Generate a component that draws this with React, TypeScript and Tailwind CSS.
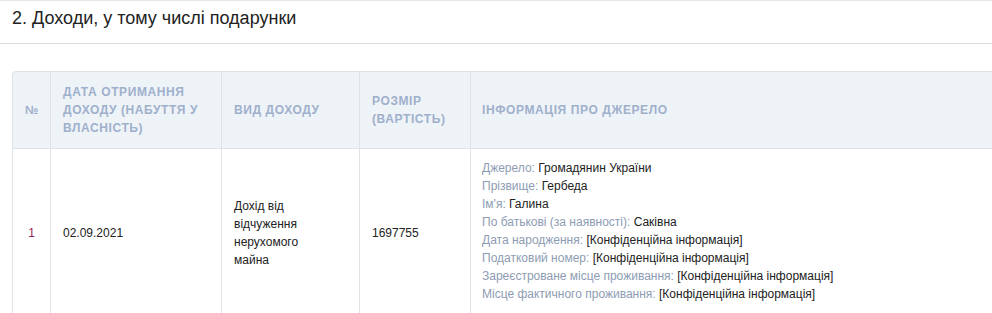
import React from 'react';

const sourceInfo: [string, string][] = [
  ['Джерело', 'Громадянин України'],
  ['Прізвище', 'Гербеда'],
  ["Ім'я", 'Галина'],
  ['По батькові (за наявності)', 'Саківна'],
  ['Дата народження', '[Конфіденційна інформація]'],
  ['Податковий номер', '[Конфіденційна інформація]'],
  ['Зареєстроване місце проживання', '[Конфіденційна інформація]'],
  ['Місце фактичного проживання', '[Конфіденційна інформація]'],
];

const th = 'border border-[#dfe3e8] px-3 py-[11px] text-left align-middle font-bold uppercase tracking-[0.05em] text-[#9fb0cc] text-[12px] leading-[18px]';
const td = 'border border-[#dfe3e8] px-3 align-middle text-[12px] leading-[18px]';

const App: React.FC = () => {
  return (
    <div className="w-[992px] h-[313px] overflow-hidden bg-white font-['Liberation_Sans',Arial,sans-serif] border-t border-[#e6e6e6]">
      <div className="border-b border-[#dddddd] px-3 pt-[6px] pb-[14px]">
        <h2 className="text-[18px] leading-[22px] text-[#222]">2. Доходи, у тому числі подарунки</h2>
      </div>

      <div className="pl-3 pt-[27px]">
        <table className="w-[1100px] table-fixed border-separate border-spacing-0 rounded-tl-[4px]">
          <colgroup>
            <col className="w-[39px]" />
            <col className="w-[171px]" />
            <col className="w-[138px]" />
            <col className="w-[111px]" />
            <col />
          </colgroup>
          <thead>
            <tr className="bg-[#eef3f8]">
              <th className={`${th} text-center px-0 rounded-tl-[4px]`}>№</th>
              <th className={`${th} border-l-0`}>Дата отримання доходу (набуття у власність)</th>
              <th className={`${th} border-l-0`}>Вид доходу</th>
              <th className={`${th} border-l-0`}>Розмір (вартість)</th>
              <th className={`${th} border-l-0 pl-[11px]`}>Інформація про джерело</th>
            </tr>
          </thead>
          <tbody>
            <tr>
              <td className={`${td} border-t-0 text-center px-0 text-[#9a1f5a]`}>1</td>
              <td className={`${td} border-t-0 border-l-0 text-[#222]`}>02.09.2021</td>
              <td className={`${td} border-t-0 border-l-0 text-[#222]`}>
                <div className="w-[80px]">Дохід від відчуження нерухомого майна</div>
              </td>
              <td className={`${td} border-t-0 border-l-0 text-[#222]`}>1697755</td>
              <td className={`${td} border-t-0 border-l-0 pt-[10px] pb-[14px] pl-[11px] text-[#222]`}>
                {sourceInfo.map(([label, value]) => (
                  <div key={label}>
                    <span className="text-[#8d9cb2]">{label}: </span>
                    <span>{value}</span>
                  </div>
                ))}
              </td>
            </tr>
          </tbody>
        </table>
      </div>
    </div>
  );
};

export default App;
